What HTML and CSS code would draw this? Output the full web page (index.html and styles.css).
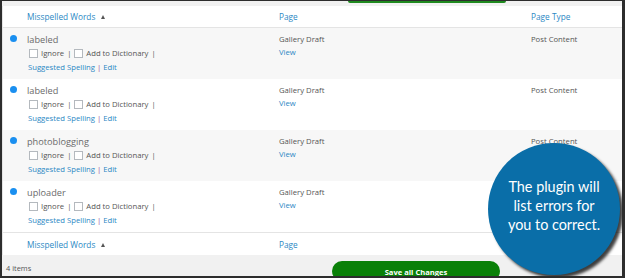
FILE: index.html
```html
<!DOCTYPE html>
<html lang="en">
<head>
  <meta charset="UTF-8">
  <title>Spell Check Results</title>
  <link rel="stylesheet" href="styles.css">
</head>
<body>

  <div class="screen">
    <div class="topbar"><span class="save-edge"></span></div>

    <div class="list">
      <div class="row head">
        <span></span>
        <a class="sort">Misspelled Words <i class="arrow"></i></a>
        <a>Page</a>
        <a>Page Type</a>
      </div>

      <div class="row item alt">
        <span class="dot"></span>
        <div class="word">
          <div class="term">labeled</div>
          <div class="actions">
            <label><input type="checkbox"> Ignore</label> |
            <label><input type="checkbox"> Add to Dictionary</label> |
          </div>
          <div class="links"><a>Suggested Spelling</a> <span class="sep">|</span> <a>Edit</a></div>
        </div>
        <div class="page">Gallery Draft<a>View</a></div>
        <div class="type">Post Content</div>
      </div>

      <div class="row item">
        <span class="dot"></span>
        <div class="word">
          <div class="term">labeled</div>
          <div class="actions">
            <label><input type="checkbox"> Ignore</label> |
            <label><input type="checkbox"> Add to Dictionary</label> |
          </div>
          <div class="links"><a>Suggested Spelling</a> <span class="sep">|</span> <a>Edit</a></div>
        </div>
        <div class="page">Gallery Draft<a>View</a></div>
        <div class="type">Post Content</div>
      </div>

      <div class="row item alt">
        <span class="dot"></span>
        <div class="word">
          <div class="term">photoblogging</div>
          <div class="actions">
            <label><input type="checkbox"> Ignore</label> |
            <label><input type="checkbox"> Add to Dictionary</label> |
          </div>
          <div class="links"><a>Suggested Spelling</a> <span class="sep">|</span> <a>Edit</a></div>
        </div>
        <div class="page">Gallery Draft<a>View</a></div>
        <div class="type">Post Content</div>
      </div>

      <div class="row item">
        <span class="dot"></span>
        <div class="word">
          <div class="term">uploader</div>
          <div class="actions">
            <label><input type="checkbox"> Ignore</label> |
            <label><input type="checkbox"> Add to Dictionary</label> |
          </div>
          <div class="links"><a>Suggested Spelling</a> <span class="sep">|</span> <a>Edit</a></div>
        </div>
        <div class="page">Gallery Draft<a>View</a></div>
        <div class="type">Post Content</div>
      </div>

      <div class="row head foot">
        <span></span>
        <a class="sort">Misspelled Words <i class="arrow"></i></a>
        <a>Page</a>
        <a>Page Type</a>
      </div>
    </div>

    <div class="bottombar">
      <span class="count">4 items</span>
      <button class="save">Save all Changes</button>
    </div>

    <div class="callout">The plugin will<br>list errors for<br>you to correct.</div>
  </div>

</body>
</html>
```

FILE: styles.css
```css
* {
  box-sizing: border-box;
  font-family: 'Open Sans', sans-serif;
}

body {
  margin: 0;
  color: #555;
}

a {
  color: #2b88c4;
  text-decoration: none;
}

.screen {
  position: relative;
  width: 625px;
  height: 278px;
  overflow: hidden;
  background: #f1f1f1;
  border: 2px solid #2d2d2d;
  border-top-width: 1px;
  border-right-width: 3px;
}

.topbar {
  height: 5px;
}

.save-edge {
  display: block;
  margin-left: 346px;
  width: 158px;
  height: 2px;
  background: #1f8a1f;
  border-radius: 0 0 3px 3px;
}

.list {
  background: #fff;
  border-left: 1px solid #e5e5e5;
}

.row {
  display: grid;
  grid-template-columns: 24px 252px 252px 1fr;
}

.head {
  height: 22px;
  align-items: center;
  border-bottom: 1px solid #e4e4e4;
  font-size: 8.3px;
}

.foot {
  border-bottom: none;
  border-top: 1px solid #e4e4e4;
  height: 23px;
}

.arrow {
  display: inline-block;
  margin-left: 3px;
  border-left: 2.5px solid transparent;
  border-right: 2.5px solid transparent;
  border-bottom: 4px solid #555;
  vertical-align: 1px;
}

.item {
  height: 51px;
  padding-top: 6px;
  font-size: 7.7px;
}

.alt {
  background: #f7f7f7;
}

.dot {
  width: 7px;
  height: 7px;
  margin: 1px 0 0 7px;
  border-radius: 50%;
  background: #1a8ff0;
}

.term {
  font-size: 9.2px;
  line-height: 12px;
  color: #6a6a6a;
}

.actions {
  display: flex;
  align-items: center;
  gap: 3px;
  height: 14px;
  margin-left: 2px;
  color: #555;
}

.actions label {
  display: flex;
  align-items: center;
}

.actions input {
  appearance: none;
  width: 9px;
  height: 9px;
  margin: 0 3px 0 0;
  border: 1px solid #b4b9be;
  background: #fff;
}

.links {
  line-height: 14px;
  margin-left: 1px;
}

.sep {
  color: #9b4f96;
}

.page {
  display: flex;
  flex-direction: column;
  line-height: 11px;
  color: #555;
}

.page a {
  margin-top: 2px;
}

.type {
  line-height: 11px;
  color: #555;
}

.bottombar {
  display: grid;
  grid-template-columns: 326px 168px;
  height: 21px;
  padding: 6px 0 0 4px;
  font-size: 7.4px;
}

.count {
  padding-top: 2px;
}

.save {
  display: block;
  height: 20px;
  padding: 1px 0 0;
  border: none;
  border-radius: 10px;
  background: #0a8008;
  color: #fff;
  font-size: 7.6px;
  font-weight: bold;
  align-self: start;
}

.callout {
  position: absolute;
  left: 486px;
  top: 142px;
  width: 132px;
  height: 132px;
  padding-top: 34px;
  border-radius: 50%;
  background: #0a6ea8;
  box-shadow: 3px 3px 3px rgba(0, 0, 0, 0.75);
  color: #fff;
  font-family: 'Lato', sans-serif;
  font-size: 14.4px;
  line-height: 19px;
  text-align: center;
}
```
